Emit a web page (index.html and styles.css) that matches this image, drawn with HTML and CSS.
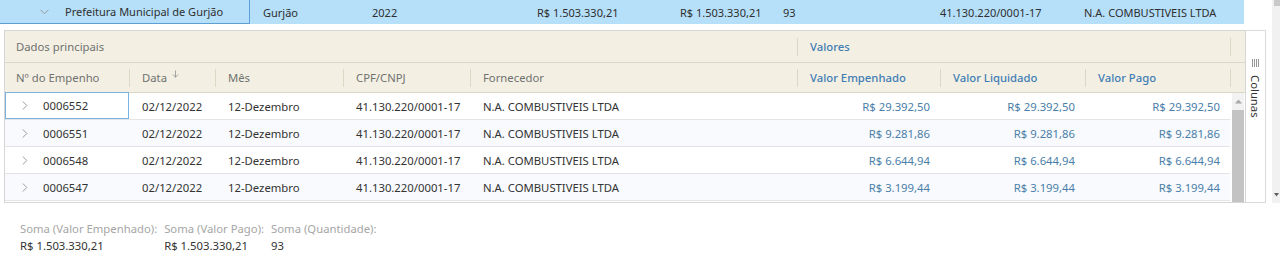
FILE: index.html
```html
<!DOCTYPE html>
<html lang="pt-BR">
<head>
<meta charset="utf-8">
<title>Empenhos</title>
<link rel="stylesheet" href="styles.css">
</head>
<body>
<div class="viewport">
  <div class="scroll-content">
    <div class="master-row">
      <div class="mcell mcell-first">
        <svg class="chev-down" width="9" height="6" viewBox="0 0 9 6"><polyline points="0.5,0.8 4.5,4.8 8.5,0.8" fill="none" stroke="#9a9a9a" stroke-width="1"/></svg>
        <span>Prefeitura Municipal de Gurjão</span>
      </div>
      <div class="mcell">Gurjão</div>
      <div class="mcell">2022</div>
      <div class="mcell mcell-r1">R$ 1.503.330,21</div>
      <div class="mcell">R$ 1.503.330,21</div>
      <div class="mcell">93</div>
      <div class="mcell">41.130.220/0001-17</div>
      <div class="mcell">N.A. COMBUSTIVEIS LTDA</div>
    </div>

    <div class="detail">
      <div class="panel">
        <div class="grid ghead">
          <div class="hcell span5 first">Dados principais</div>
          <div class="hcell span3 blue"><i class="sep"></i>Valores</div>
          <div class="hcell"><i class="sep"></i></div>
        </div>
        <div class="grid chead">
          <div class="hcell first">Nº do Empenho</div>
          <div class="hcell"><i class="sep"></i>Data<svg class="sort" width="7" height="8" viewBox="0 0 7 8"><path d="M3.5 0.5V7.2M0.8 4.5L3.5 7.2L6.2 4.5" fill="none" stroke="#9a9a9a" stroke-width="0.9"/></svg></div>
          <div class="hcell"><i class="sep"></i>Mês</div>
          <div class="hcell"><i class="sep"></i>CPF/CNPJ</div>
          <div class="hcell"><i class="sep"></i>Fornecedor</div>
          <div class="hcell blue"><i class="sep"></i>Valor Empenhado</div>
          <div class="hcell blue"><i class="sep"></i>Valor Liquidado</div>
          <div class="hcell blue"><i class="sep"></i>Valor Pago</div>
          <div class="hcell"><i class="sep"></i></div>
        </div>
        <div class="body">
          <div class="rows">
            <div class="row">
              <div class="dcell first focus"><svg class="chev-right" width="6" height="9" viewBox="0 0 6 9"><polyline points="0.8,0.5 4.8,4.5 0.8,8.5" fill="none" stroke="#9a9a9a" stroke-width="1"/></svg>0006552</div>
              <div class="dcell">02/12/2022</div>
              <div class="dcell">12-Dezembro</div>
              <div class="dcell">41.130.220/0001-17</div>
              <div class="dcell">N.A. COMBUSTIVEIS LTDA</div>
              <div class="dcell num">R$ 29.392,50</div>
              <div class="dcell num">R$ 29.392,50</div>
              <div class="dcell num">R$ 29.392,50</div>
            </div>
            <div class="row alt">
              <div class="dcell first"><svg class="chev-right" width="6" height="9" viewBox="0 0 6 9"><polyline points="0.8,0.5 4.8,4.5 0.8,8.5" fill="none" stroke="#9a9a9a" stroke-width="1"/></svg>0006551</div>
              <div class="dcell">02/12/2022</div>
              <div class="dcell">12-Dezembro</div>
              <div class="dcell">41.130.220/0001-17</div>
              <div class="dcell">N.A. COMBUSTIVEIS LTDA</div>
              <div class="dcell num">R$ 9.281,86</div>
              <div class="dcell num">R$ 9.281,86</div>
              <div class="dcell num">R$ 9.281,86</div>
            </div>
            <div class="row">
              <div class="dcell first"><svg class="chev-right" width="6" height="9" viewBox="0 0 6 9"><polyline points="0.8,0.5 4.8,4.5 0.8,8.5" fill="none" stroke="#9a9a9a" stroke-width="1"/></svg>0006548</div>
              <div class="dcell">02/12/2022</div>
              <div class="dcell">12-Dezembro</div>
              <div class="dcell">41.130.220/0001-17</div>
              <div class="dcell">N.A. COMBUSTIVEIS LTDA</div>
              <div class="dcell num">R$ 6.644,94</div>
              <div class="dcell num">R$ 6.644,94</div>
              <div class="dcell num">R$ 6.644,94</div>
            </div>
            <div class="row alt">
              <div class="dcell first"><svg class="chev-right" width="6" height="9" viewBox="0 0 6 9"><polyline points="0.8,0.5 4.8,4.5 0.8,8.5" fill="none" stroke="#9a9a9a" stroke-width="1"/></svg>0006547</div>
              <div class="dcell">02/12/2022</div>
              <div class="dcell">12-Dezembro</div>
              <div class="dcell">41.130.220/0001-17</div>
              <div class="dcell">N.A. COMBUSTIVEIS LTDA</div>
              <div class="dcell num">R$ 3.199,44</div>
              <div class="dcell num">R$ 3.199,44</div>
              <div class="dcell num">R$ 3.199,44</div>
            </div>
          </div>
          <div class="vbar">
            <svg class="vbar-up" width="7" height="5" viewBox="0 0 7 5"><polygon points="0,4.5 3.5,0.5 7,4.5" fill="#a8a8a8"/></svg>
            <div class="vbar-thumb"></div>
          </div>
        </div>
      </div>
      <div class="side">
        <svg class="side-icon" width="8" height="8" viewBox="0 0 8 8"><path d="M0.5 0V8M2.5 0V8M4.5 0V8M6.5 0V8" stroke="#8a8a8a" stroke-width="0.9"/></svg>
        <span class="side-label">Colunas</span>
      </div>
    </div>
  </div>
  <div class="outer-bar">
    <div class="outer-thumb"></div>
    <svg class="outer-down" width="5" height="4" viewBox="0 0 5 4"><polygon points="0,0 5,0 2.5,3.5" fill="#606060"/></svg>
  </div>
</div>

<div class="footer">
  <div class="sum">
    <div class="sum-label">Soma (Valor Empenhado):</div>
    <div class="sum-value">R$ 1.503.330,21</div>
  </div>
  <div class="sum">
    <div class="sum-label">Soma (Valor Pago):</div>
    <div class="sum-value">R$ 1.503.330,21</div>
  </div>
  <div class="sum">
    <div class="sum-label">Soma (Quantidade):</div>
    <div class="sum-value">93</div>
  </div>
</div>
</body>
</html>
```

FILE: styles.css
```css
* { box-sizing: border-box; }

html, body {
  margin: 0;
  padding: 0;
  background: #ffffff;
}

body {
  font-family: "Noto Sans", "Open Sans", sans-serif;
  font-size: 11.3px;
  color: #333333;
  width: 1280px;
  overflow: hidden;
}

.viewport {
  display: flex;
  height: 203px;
}

.scroll-content {
  width: 1272px;
  display: flex;
  flex-direction: column;
}

/* master row */
.master-row {
  display: grid;
  grid-template-columns: 250px 109px 165px 143px 103px 157px 144px 173px;
  width: 1244px;
  height: 24px;
  background: #b6e0fa;
  color: #2f2f2f;
  font-size: 11px;
}

.mcell {
  display: flex;
  align-items: center;
  padding-left: 13px;
  white-space: nowrap;
}

.mcell-first {
  padding-left: 40px;
  border-right: 1px solid #5c9fd6;
  border-bottom: 1px solid #5c9fd6;
}

.chev-down {
  margin-right: 16px;
}

/* detail */
.detail {
  display: flex;
  margin-top: 6px;
  padding-left: 4px;
  height: 173px;
}

.panel {
  width: 1242px;
  border: 1px solid #d6d6d6;
  background: #f3f0e3;
  display: flex;
  flex-direction: column;
}

.grid {
  display: grid;
  grid-template-columns: 124px 86px 128px 127px 327px 143px 145px 145px 1fr;
}

.ghead {
  height: 32px;
  border-bottom: 1px solid #dcd8c8;
}

.chead {
  height: 30px;
  border-bottom: 1px solid #dcd8c8;
}

.hcell {
  display: flex;
  align-items: center;
  color: #707070;
  white-space: nowrap;
}

.hcell.first {
  padding-left: 11px;
}

.hcell.blue {
  color: #3f7db5;
  font-weight: 500;
}

.span5 { grid-column: span 5; }
.span3 { grid-column: span 3; }

.sep {
  display: block;
  width: 1px;
  height: 18px;
  background: #dcd8c6;
  margin-right: 12px;
  flex: none;
}

.sort {
  margin-left: 5px;
  margin-top: -7px;
}

.body {
  flex: 1;
  display: flex;
  background: #ffffff;
}

.rows {
  width: 1225px;
  display: flex;
  flex-direction: column;
}

.row {
  display: grid;
  grid-template-columns: 124px 86px 128px 127px 327px 143px 145px 145px;
  height: 27px;
  border-bottom: 1px solid #e4e4e4;
  background: #ffffff;
}

.row.alt {
  background: #f8fafd;
}

.dcell {
  display: flex;
  align-items: center;
  padding-left: 13px;
  white-space: nowrap;
  color: #333333;
}

.dcell.first {
  padding-left: 17px;
}

.dcell.focus {
  border: 1px solid #7ab3e2;
  margin-top: -1px;
  padding-left: 16px;
}

.chev-right {
  margin-right: 15px;
}

.dcell.num {
  justify-content: flex-end;
  padding-left: 0;
  padding-right: 10px;
  color: #4a7ea9;
}

.vbar {
  flex: 1;
  margin-left: 2px;
  margin-right: 1px;
  background: #f2f2f2;
  display: flex;
  flex-direction: column;
  align-items: center;
}

.vbar-up {
  margin-top: 6px;
  margin-bottom: 6px;
}

.vbar-thumb {
  flex: 1;
  width: 100%;
  background: #c3c3c3;
}

/* side column tab */
.side {
  width: 20px;
  border: 1px solid #d9d9d9;
  border-left: none;
  background: #ffffff;
  display: flex;
  flex-direction: column;
  align-items: center;
  padding-top: 28px;
}

.side-icon {
  margin-bottom: 8px;
}

.side-label {
  writing-mode: vertical-rl;
  color: #333333;
  font-size: 11.3px;
}

/* outer scrollbar */
.outer-bar {
  width: 8px;
  background: #f1f1f1;
  display: flex;
  flex-direction: column;
  align-items: flex-end;
}

.outer-thumb {
  width: 6px;
  height: 6px;
  background: #c9c9c9;
}

.outer-down {
  margin-top: auto;
  margin-bottom: 6px;
  margin-right: 1px;
}

/* footer */
.footer {
  display: flex;
  gap: 7px;
  padding: 17px 0 0 20px;
  line-height: 17px;
}

.sum-label {
  color: #a6a6a6;
}

.sum-value {
  color: #333333;
}
```
